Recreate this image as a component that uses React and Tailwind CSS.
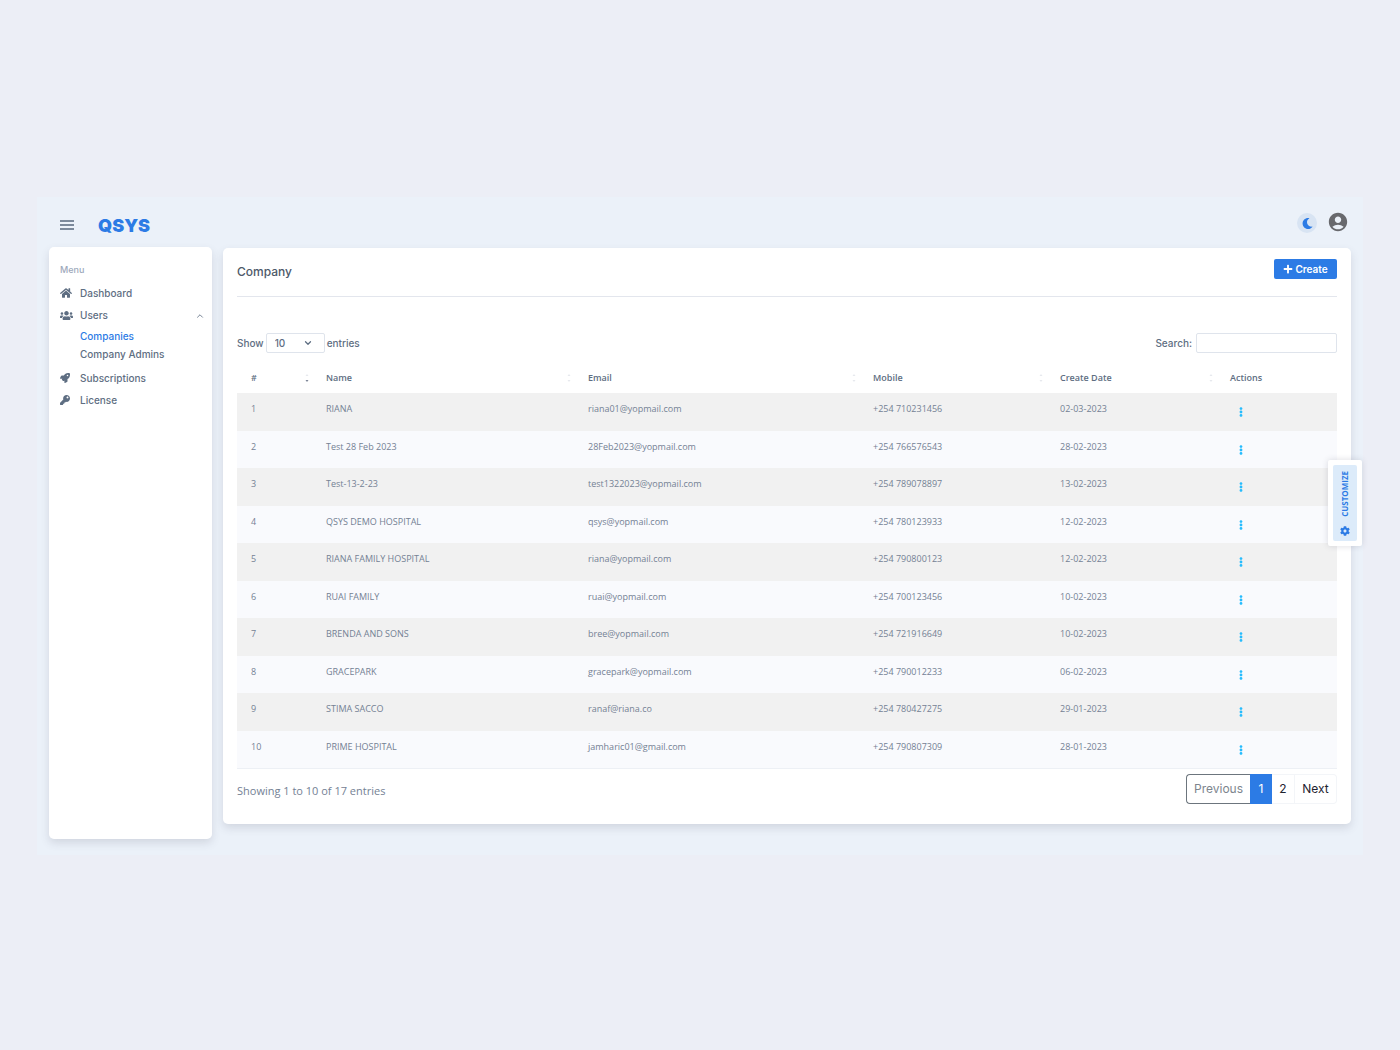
import { FaHome, FaUsers, FaRocket, FaKey, FaMoon, FaCog, FaPlus, FaEllipsisV } from 'react-icons/fa';
import { MdAccountCircle } from 'react-icons/md';
import { ChevronDown, ChevronUp } from 'lucide-react';

const companies = [
    { id: 1, name: 'RIANA', email: 'riana01@yopmail.com', mobile: '+254 710231456', date: '02-03-2023' },
    { id: 2, name: 'Test 28 Feb 2023', email: '28Feb2023@yopmail.com', mobile: '+254 766576543', date: '28-02-2023' },
    { id: 3, name: 'Test-13-2-23', email: 'test1322023@yopmail.com', mobile: '+254 789078897', date: '13-02-2023' },
    { id: 4, name: 'QSYS DEMO HOSPITAL', email: 'qsys@yopmail.com', mobile: '+254 780123933', date: '12-02-2023' },
    { id: 5, name: 'RIANA FAMILY HOSPITAL', email: 'riana@yopmail.com', mobile: '+254 790800123', date: '12-02-2023' },
    { id: 6, name: 'RUAI FAMILY', email: 'ruai@yopmail.com', mobile: '+254 700123456', date: '10-02-2023' },
    { id: 7, name: 'BRENDA AND SONS', email: 'bree@yopmail.com', mobile: '+254 721916649', date: '10-02-2023' },
    { id: 8, name: 'GRACEPARK', email: 'gracepark@yopmail.com', mobile: '+254 790012233', date: '06-02-2023' },
    { id: 9, name: 'STIMA SACCO', email: 'ranaf@riana.co', mobile: '+254 780427275', date: '29-01-2023' },
    { id: 10, name: 'PRIME HOSPITAL', email: 'jamharic01@gmail.com', mobile: '+254 790807309', date: '28-01-2023' },
];

const columns = [
    { label: '#', width: 'w-[75px]', sortable: true, sorted: true },
    { label: 'Name', width: 'w-[262px]', sortable: true },
    { label: 'Email', width: 'w-[285px]', sortable: true },
    { label: 'Mobile', width: 'w-[187px]', sortable: true },
    { label: 'Create Date', width: 'w-[170px]', sortable: true },
    { label: 'Actions', width: 'w-[121px]' },
];

function SortIcon({ sorted }) {
    return (
        <svg viewBox="0 0 4 10" className="h-2.5 w-1">
            <path d="M0.5 3 2 1 3.5 3z" fill="#e6e9ee" />
            <path d="M0.5 7 2 9 3.5 7z" fill={sorted ? '#7b8496' : '#e6e9ee'} />
        </svg>
    );
}

function Header() {
    return (
        <header className="flex h-[50px] items-center pt-1.5 pr-3.5 pl-[23px]">
            <button type="button" aria-label="Toggle menu" className="flex w-3.5 flex-col gap-0.5">
                <span className="h-0.5 bg-[#7b899b]" />
                <span className="h-0.5 bg-[#7b899b]" />
                <span className="h-0.5 bg-[#7b899b]" />
            </button>
            <a href="#" className="ml-6 pt-0.5 text-lg leading-6 font-black text-[#2c7be5]">QSYS</a>
            <div className="ml-auto flex items-center gap-2.5 pb-1">
                <button type="button" aria-label="Dark mode" className="flex size-5 items-center justify-center rounded-full bg-[#d8e4f3] text-[#2c7be5]">
                    <FaMoon className="size-[11px]" />
                </button>
                <button type="button" aria-label="Account" className="pb-0.5 text-[#68696d]">
                    <MdAccountCircle className="size-[22px]" />
                </button>
            </div>
        </header>
    );
}

function Sidebar() {
    return (
        <nav className="min-h-[592px] w-[163px] shrink-0 rounded-[5px] bg-white px-[11px] pt-4 text-[10px] font-medium text-[#5e6e82] shadow-[0_4px_9px_rgba(65,69,88,0.15)]">
            <p className="text-[9px] leading-[14px] text-[#9da9bb]">Menu</p>
            <ul className="mt-[5px]">
                <li>
                    <a href="#" className="flex h-[22px] items-center"><FaHome className="mr-2 size-3" />Dashboard</a>
                </li>
                <li>
                    <button type="button" className="flex h-[23px] w-full items-center">
                        <FaUsers className="mr-[7px] size-[13px]" />Users
                        <ChevronUp className="-mr-1 ml-auto size-2.5" />
                    </button>
                    <ul className="pb-1 pl-5">
                        <li><a href="#" className="flex h-[18px] items-center text-[#2c7be5]">Companies</a></li>
                        <li><a href="#" className="flex h-[18px] items-center">Company Admins</a></li>
                    </ul>
                </li>
                <li>
                    <a href="#" className="flex h-[22px] items-center"><FaRocket className="mr-2.5 size-2.5" />Subscriptions</a>
                </li>
                <li>
                    <a href="#" className="flex h-[22px] items-center"><FaKey className="mr-2.5 size-2.5" />License</a>
                </li>
            </ul>
        </nav>
    );
}

function CompanyTable() {
    return (
        <table className="mt-2 w-full table-fixed text-left font-['Open_Sans',sans-serif] text-[9px] text-[#748194]">
            <thead>
                <tr className="h-8 text-[#5e6e82]">
                    {columns.map((col) => (
                        <th key={col.label} className={`${col.width} pt-0.5 pr-[3px] pl-3.5 font-semibold`}>
                            <span className="flex items-center justify-between">
                                {col.label}
                                {col.sortable && <SortIcon sorted={col.sorted} />}
                            </span>
                        </th>
                    ))}
                </tr>
            </thead>
            <tbody className="border-b border-[#edf0f5]">
                {companies.map((c) => (
                    <tr key={c.id} className="align-top leading-3 odd:h-[38px] odd:bg-[#f1f1f1] even:h-[37px] even:bg-[#f9fafd]">
                        <td className="pt-2.5 pl-3.5">{c.id}</td>
                        <td className="pt-2.5 pl-3.5">{c.name}</td>
                        <td className="pt-2.5 pl-3.5">{c.email}</td>
                        <td className="pt-2.5 pl-3.5">{c.mobile}</td>
                        <td className="pt-2.5 pl-3.5">{c.date}</td>
                        <td className="pt-3.5 pl-5">
                            <button type="button" aria-label={`Actions for ${c.name}`} className="block text-[#27bcfd]">
                                <FaEllipsisV className="size-2.5" />
                            </button>
                        </td>
                    </tr>
                ))}
            </tbody>
        </table>
    );
}

function Pagination() {
    return (
        <div className="flex h-[30px] text-xs text-[#1f2430]">
            <button type="button" className="w-16 rounded-l-sm border border-r-0 border-[#6c757d] text-[#7d858e]">Previous</button>
            <button type="button" className="w-[22px] bg-[#2c7be5] text-white">1</button>
            <button type="button" className="w-[23px] border-y border-r border-[#f3f5f8]">2</button>
            <button type="button" className="w-[42px] rounded-r-sm border-y border-r border-[#f3f5f8]">Next</button>
        </div>
    );
}

export default function App() {
    return (
        <div className="min-h-screen bg-[#eceef6] px-[37px] pt-[197px] pb-12 font-['Inter',sans-serif]">
            <div className="relative bg-[#ebf1f9] pb-4">
                <Header />
                <div className="flex items-start gap-[11px] px-3">
                    <Sidebar />
                    <main className="mt-px min-w-0 flex-1 rounded-[5px] bg-white px-3.5 pt-[11px] pb-5 shadow-[0_4px_9px_rgba(65,69,88,0.15)]">
                        <div className="flex items-start justify-between border-b border-[#e3e6ed] pb-4">
                            <h1 className="pt-[5px] text-xs leading-4 font-medium text-[#4d5969]">Company</h1>
                            <button type="button" className="flex h-5 w-[63px] items-center justify-center gap-0.5 rounded-xs bg-[#2c7be5] text-[10px] font-semibold text-white">
                                <FaPlus className="size-2.5" />Create
                            </button>
                        </div>
                        <div className="mt-9 flex items-center justify-between text-[10px] font-medium text-[#5e6e82]">
                            <label className="flex items-center gap-0.5">
                                Show
                                <span className="relative">
                                    <select defaultValue="10" className="h-5 w-[59px] appearance-none rounded-xs border border-[#dfe4ec] bg-white pl-2">
                                        <option>10</option>
                                        <option>25</option>
                                        <option>50</option>
                                        <option>100</option>
                                    </select>
                                    <ChevronDown className="pointer-events-none absolute top-[5px] right-3 size-2.5" strokeWidth={3} />
                                </span>
                                entries
                            </label>
                            <label className="flex items-center gap-1">
                                Search:
                                <input type="search" className="h-5 w-[141px] rounded-xs border border-[#dfe4ec] bg-white px-2" />
                            </label>
                        </div>
                        <CompanyTable />
                        <div className="mt-[5px] flex items-center justify-between">
                            <p className="pt-1 font-['Open_Sans',sans-serif] text-[11px] leading-4 text-[#748194]">Showing 1 to 10 of 17 entries</p>
                            <Pagination />
                        </div>
                    </main>
                </div>
                <button type="button" className="absolute top-[263px] right-px rounded-xs bg-white p-[5px] shadow-[0_0_6px_rgba(65,69,88,0.18)]">
                    <span className="flex h-[76px] w-6 flex-col items-center justify-between rounded-xs bg-[#dcebfa] pt-1.5 pb-[5px] text-[#2c7be5]">
                        <span className="rotate-180 font-['Open_Sans',sans-serif] text-[8px] leading-3 font-bold [writing-mode:vertical-rl]">CUSTOMIZE</span>
                        <FaCog className="size-2.5" />
                    </span>
                </button>
            </div>
        </div>
    );
}
